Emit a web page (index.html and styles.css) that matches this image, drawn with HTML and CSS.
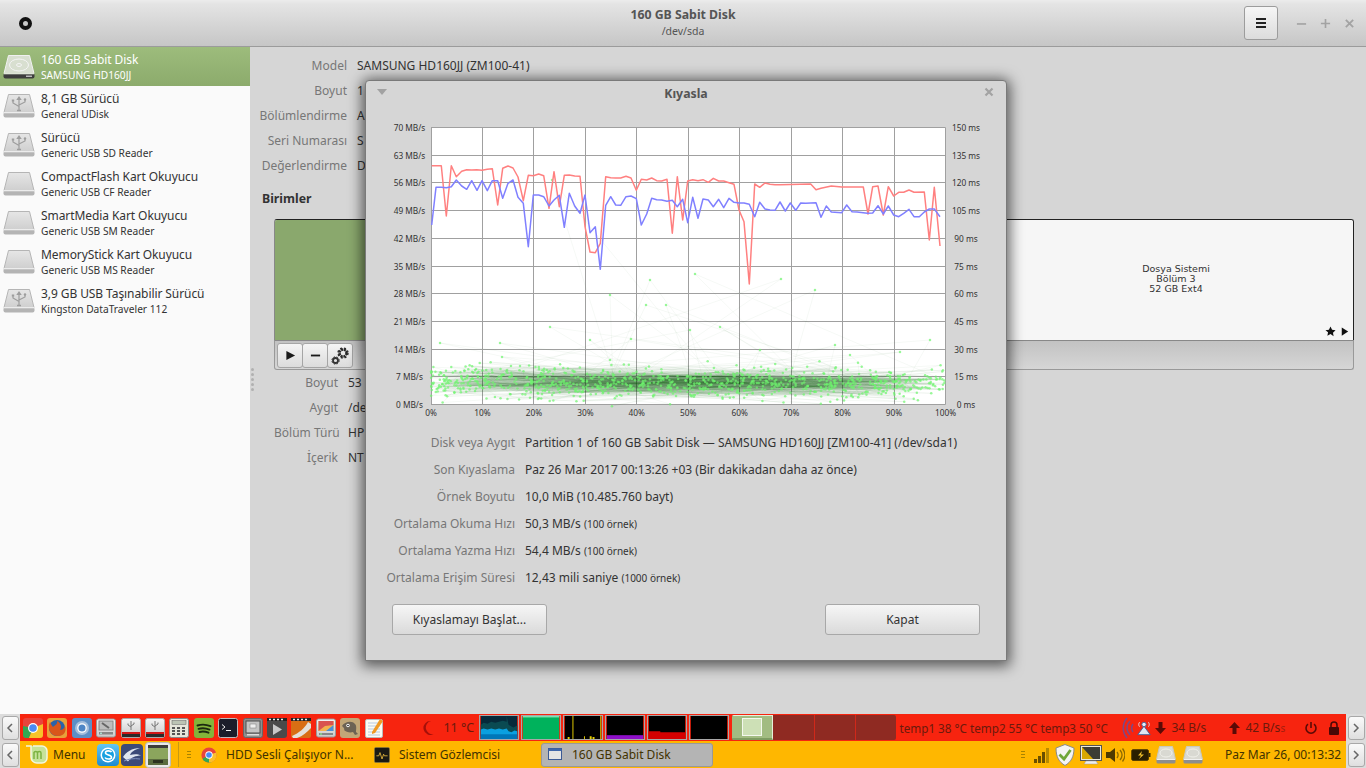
FILE: index.html
```html
<!DOCTYPE html>
<html lang="tr">
<head>
<meta charset="utf-8">
<title>Diskler</title>
<link rel="stylesheet" href="styles.css">
</head>
<body>
<svg class="defs" width="0" height="0" aria-hidden="true">
  <defs>
    <linearGradient id="gDrive" x1="0" y1="0" x2="0" y2="1"><stop offset="0" stop-color="#e6e6e6"/><stop offset="1" stop-color="#cfcfcf"/></linearGradient>
    <linearGradient id="gTile" x1="0" y1="0" x2="0" y2="1"><stop offset="0" stop-color="#f4f4f4"/><stop offset="1" stop-color="#c9c9c9"/></linearGradient>
    <linearGradient id="gBlue" x1="0" y1="0" x2="0" y2="1"><stop offset="0" stop-color="#62c6f5"/><stop offset="1" stop-color="#1c8ad0"/></linearGradient>
    <symbol id="drive" viewBox="0 0 32 24"><path d="M5.5 .5h21l4.5 18H1z" fill="url(#gDrive)" stroke="#b5b5b5"/><rect x=".5" y="18" width="31" height="5.5" rx="2" fill="#b4b4b4"/><rect x="1" y="18" width="30" height="1.3" fill="#ececec"/></symbol>
    <symbol id="usb" viewBox="0 0 32 24"><use href="#drive"/><path d="M16 3v13M16 3l-1.6 2.400h3.200zM16 12.500 10 9V7M16 11l6-3V6" fill="none" stroke="#9d9d9d" stroke-width="1.200"/><rect x="8.800" y="5.500" width="2.400" height="2" fill="#9d9d9d"/><circle cx="22" cy="5.500" r="1.200" fill="#9d9d9d"/><path d="M14 16.500h4" stroke="#9d9d9d" stroke-width="1.500"/></symbol>
    <symbol id="hdd" viewBox="0 0 32 24"><path d="M5.500 .5h21l4.500 18H1z" fill="#d8dfd0" stroke="#f0f0f0"/><ellipse cx="16" cy="10" rx="9.500" ry="6" fill="none" stroke="#f4f4f4"/><ellipse cx="16" cy="10" rx="2.500" ry="1.500" fill="none" stroke="#f4f4f4"/><rect x=".5" y="18" width="31" height="5.500" rx="2" fill="#3d3d3d"/><rect x="1" y="18" width="30" height="1.300" fill="#dfe6d8"/><rect x="23" y="20.500" width="6" height="1.500" fill="#bbb"/></symbol>
    <symbol id="chrome" viewBox="0 0 20 20"><circle cx="10" cy="10" r="9.500" fill="#e8453c"/><path d="M10 10 1.800 14.800A9.500 9.500 0 0 0 10 19.500 9.500 9.500 0 0 0 13 19z" fill="#34a853"/><path d="M10 10 19 7A9.500 9.500 0 0 1 10 19.500z" fill="#fbc02d"/><circle cx="10" cy="10" r="4.600" fill="#fff"/><circle cx="10" cy="10" r="3.500" fill="#4a8af4"/></symbol>
    <symbol id="tileChrome" viewBox="0 0 20 20"><rect width="20" height="20" rx="3" fill="#e8453c"/><path d="M0 8 10 10 6 20H3a3 3 0 0 1-3-3z" fill="#34a853"/><path d="M20 6 10 10 6 20h11a3 3 0 0 0 3-3z" fill="#f7c32a"/><circle cx="10" cy="10" r="5" fill="#fff"/><circle cx="10" cy="10" r="3.800" fill="#4a8af4"/></symbol>
    <symbol id="firefox" viewBox="0 0 20 20"><rect width="20" height="20" rx="3" fill="#e8a13a"/><circle cx="10" cy="10" r="8" fill="#2a62a8"/><path d="M3 4c-3 6 0 14 8 14 6 0 9-5 7-10-1 3-3 4-5 4 2-3 1-7-3-9 1 3-2 4-4 6-1-1-2-3-3-5z" fill="#d9571a"/></symbol>
    <symbol id="chromium" viewBox="0 0 20 20"><rect width="20" height="20" rx="3" fill="#5d8fc6"/><circle cx="10" cy="10" r="7" fill="#a5bfdd"/><circle cx="10" cy="10" r="4.800" fill="#fff"/><circle cx="10" cy="10" r="3.500" fill="#4e86c6"/></symbol>
    <symbol id="tool" viewBox="0 0 20 20"><rect x=".5" y="1" width="19" height="18" rx="2" fill="url(#gTile)" stroke="#999"/><rect x="3" y="3" width="14" height="9" fill="#bdbdbd" stroke="#888"/><path d="M6 5l7 5" stroke="#666" stroke-width="2"/><rect x="3" y="14" width="14" height="2.500" fill="#888"/><rect x="4" y="14.700" width="2" height="1" fill="#bfe"/></symbol>
    <symbol id="usbTile" viewBox="0 0 20 20"><rect x=".5" y=".5" width="19" height="19" rx="2" fill="url(#gTile)" stroke="#aaa"/><path d="M10 3v9M10 9 7 7V5.500M10 8l3-2V4.500" fill="none" stroke="#777"/><rect x="1" y="14" width="18" height="2" fill="#d01818"/><rect x="1" y="16" width="18" height="3" fill="#2a2a2a"/></symbol>
    <symbol id="calc" viewBox="0 0 20 20"><rect x=".5" y=".5" width="19" height="19" rx="2" fill="#e6e6da" stroke="#888"/><rect x="3" y="2.500" width="14" height="4" fill="#bcc4b4" stroke="#666" stroke-width=".5"/><path d="M3 9h3v2H3zM8 9h3v2H8zM13 9h3v2h-3zM3 12h3v2H3zM8 12h3v2H8zM13 12h3v2h-3zM3 15h3v2H3zM8 15h3v2H8zM13 15h3v2h-3z" fill="#555"/></symbol>
    <symbol id="spotify" viewBox="0 0 20 20"><rect width="20" height="20" rx="3" fill="#84b43a"/><path d="M3.500 7.500c4-1.300 9-1 13 .7M4.500 10.800c3.500-1 7.500-.7 11 .8M5.500 14c3-.8 6-.5 9 .7" fill="none" stroke="#1c2a10" stroke-width="1.900" stroke-linecap="round"/></symbol>
    <symbol id="term" viewBox="0 0 20 20"><rect x=".5" y=".5" width="19" height="19" rx="2" fill="#1b1d2a" stroke="#bbb"/><path d="M4 6.500 7 9 4 11.500M8 12.500h5" fill="none" stroke="#eee"/></symbol>
    <symbol id="screen" viewBox="0 0 20 20"><rect x=".5" y=".5" width="19" height="19" rx="2" fill="#8e8e8e" stroke="#666"/><rect x="3" y="3" width="14" height="12" fill="#c4c4c4" stroke="#4d4d4d"/><rect x="7" y="6" width="6" height="4" fill="#eee" stroke="#777" stroke-width=".5"/><rect x="4" y="16" width="12" height="1.500" fill="#ddd"/></symbol>
    <symbol id="video" viewBox="0 0 20 20"><rect width="20" height="20" rx="3" fill="#4a4a4a"/><path d="M0 0h20v3H0z" fill="#222"/><path d="M2 .8h2v1.500H2zM6 .8h2v1.500H6zM10 .8h2v1.500h-2zM14 .8h2v1.500h-2z" fill="#eee"/><path d="M6 6v11l9-5.500z" fill="#c8c8c8"/></symbol>
    <symbol id="video2" viewBox="0 0 20 20"><rect width="20" height="20" rx="2" fill="#d86e14"/><path d="M0 0h20v3H0z" fill="#222"/><path d="M2 .8h2v1.500H2zM6 .8h2v1.500H6zM10 .8h2v1.500h-2zM14 .8h2v1.500h-2z" fill="#eee"/><path d="M1 18C8 15 14 10 17 4l3 2v4C16 14 12 18 6 20H2z" fill="#e4e0d8"/></symbol>
    <symbol id="monitor" viewBox="0 0 20 20"><rect x=".5" y="1" width="19" height="18" rx="2" fill="url(#gTile)" stroke="#999"/><rect x="2.500" y="3" width="15" height="10" fill="#f3b24d"/><path d="M2.500 3h15v4L9 8 2.500 13z" fill="#d9534f"/><path d="M10 13l7.500-6v6z" fill="#4a90d9"/><rect x="3" y="15" width="14" height="2" fill="#888"/><rect x="4" y="15.500" width="2" height="1" fill="#8f8"/></symbol>
    <symbol id="gimp" viewBox="0 0 20 20"><rect width="20" height="20" rx="3" fill="#c2a777"/><path d="M2 8c2-4 10-6 13-2 2 2 1 6 1 8l2 2-3 1-2-3c-3 1-7 0-9-2 1-1 0-2-2-4z" fill="#6d6354"/><circle cx="8" cy="7.500" r="1.700" fill="#fff"/><circle cx="8" cy="7.500" r=".8" fill="#111"/></symbol>
    <symbol id="notes" viewBox="0 0 20 20"><rect x="1.500" y="1.500" width="17" height="18" rx="1.500" fill="#fbfbf4" stroke="#bbb"/><path d="M4 5h12M4 8h12M4 11h12M4 14h12M4 17h12" stroke="#9cb5d6" stroke-width=".7"/><path d="M8 14 16 1l3 2-8 12-3 1z" fill="#f09a24"/></symbol>
    <symbol id="mint" viewBox="0 0 24 22"><path d="M1 1h5v11a6 6 0 0 0 6 6h5a5 5 0 0 0 5-5V6a5 5 0 0 0-5-5H8" transform="translate(0 1)" fill="#c6e39a" stroke="#f1f8e2" stroke-width="1.500"/><path d="M9 15V8M9 9c0-2 3.500-2 3.500 0v6M12.500 9c0-2 3.500-2 3.500 0v6" fill="none" stroke="#7cb342" stroke-width="1.500"/></symbol>
    <symbol id="skype" viewBox="0 0 22 22"><rect width="22" height="22" rx="4" fill="url(#gBlue)"/><circle cx="11" cy="11" r="7.500" fill="#fff"/><circle cx="11" cy="11" r="6" fill="#17a0e0"/><path d="M14.500 8c-1-1.500-6-1.800-6 .8s6 1.600 6 4.400c0 2.500-5.500 2.300-6.500.3" fill="none" stroke="#fff" stroke-width="1.600"/></symbol>
    <symbol id="earth" viewBox="0 0 22 22"><rect width="22" height="22" rx="4" fill="#3c4a78"/><path d="M2 13c3-5 9-9 17-9-6 2-9 4-10 7 4-1 8-1 11 .5-5 0-10 2-13 6z" fill="#dfe6f0"/><path d="M3 17c4-2 10-3 16-2" stroke="#7e90c0" fill="none"/></symbol>
    <symbol id="desk" viewBox="0 0 26 26"><rect x=".5" y=".5" width="25" height="25" rx="3" fill="#e9e9e9" stroke="#bbb"/><rect x="3" y="3" width="20" height="20" fill="#5a6b3e"/><rect x="3" y="3" width="20" height="3" fill="#3c3c3c"/><rect x="3" y="6" width="20" height="11" fill="#8ba55d"/><rect x="8" y="18" width="10" height="3" fill="#2c3320"/></symbol>
    <symbol id="sysmon" viewBox="0 0 20 20"><rect x=".5" y=".5" width="19" height="19" rx="2" fill="#1a1a14" stroke="#8a7a40"/><path d="M3 11h3l1.500-4 2.500 8 2-6 1 2h4" fill="none" stroke="#f0c040"/></symbol>
    <symbol id="win" viewBox="0 0 16 16"><rect x=".5" y="1.500" width="13" height="11" fill="#e4e4e4" stroke="#3c5a94"/><rect x=".5" y="1.500" width="13" height="2.500" fill="#3f66aa"/></symbol>
    <symbol id="disktray" viewBox="0 0 20 18"><path d="M3.500 .5h13l3 13H.5z" fill="#d9d9d2" stroke="#c8c8be"/><ellipse cx="10" cy="7" rx="6" ry="4" fill="none" stroke="#f0f0ea"/><rect x=".5" y="13" width="19" height="4.500" rx="1.500" fill="#8e8e8e"/><rect x="1" y="13" width="18" height="1" fill="#f0f0f0"/></symbol>
    <symbol id="shield" viewBox="0 0 20 22"><path d="M10 .5 19 4c0 9-3 14-9 17.500C4 18 1 13 1 4z" fill="#f4f4f4" stroke="#8a8a8a"/><path d="M4.500 10.500 9 15 15.500 6" fill="none" stroke="#6fa63a" stroke-width="2.800"/></symbol>
    <symbol id="gear" viewBox="0 0 20 20"><circle cx="13" cy="7" r="3.500" fill="none" stroke="#2a2a2a" stroke-width="2.500" stroke-dasharray="2.200 .6"/><circle cx="13" cy="7" r="5" fill="none" stroke="#2a2a2a" stroke-width="1.400" stroke-dasharray="2 2"/><circle cx="5.500" cy="14.500" r="2.500" fill="none" stroke="#333" stroke-width="1.800"/><circle cx="5.500" cy="14.500" r="3.700" fill="none" stroke="#333" stroke-width="1" stroke-dasharray="1.500 1.500"/></symbol>
  </defs>
</svg>

<div class="screen">
  <div class="window">
    <header class="headerbar">
      <div class="head-left"><span class="ring"></span></div>
      <div class="head-title"><strong>160 GB Sabit Disk</strong><span>/dev/sda</span></div>
      <div class="head-right">
        <button class="menu-btn" type="button" aria-label="Menü"><span class="burger"></span></button>
        <div class="wm">
          <svg viewBox="0 0 12 12"><path d="M1 6.500h10" stroke="#a3a3a3" stroke-width="1.800"/></svg>
          <svg viewBox="0 0 12 12"><path d="M1 6h10M6 1v10" stroke="#a3a3a3" stroke-width="1.800"/></svg>
          <svg viewBox="0 0 12 12"><path d="M2 2l8 8M10 2l-8 8" stroke="#a3a3a3" stroke-width="2"/></svg>
        </div>
      </div>
    </header>
    <div class="content">
      <aside class="sidebar">
        <div class="dev selected"><svg class="dev-ic"><use href="#hdd"/></svg><div class="dev-text"><div class="dev-name">160 GB Sabit Disk</div><div class="dev-sub">SAMSUNG HD160JJ</div></div></div>
        <div class="dev"><svg class="dev-ic"><use href="#usb"/></svg><div class="dev-text"><div class="dev-name">8,1 GB Sürücü</div><div class="dev-sub">General UDisk</div></div></div>
        <div class="dev"><svg class="dev-ic"><use href="#usb"/></svg><div class="dev-text"><div class="dev-name">Sürücü</div><div class="dev-sub">Generic USB SD Reader</div></div></div>
        <div class="dev"><svg class="dev-ic"><use href="#drive"/></svg><div class="dev-text"><div class="dev-name">CompactFlash Kart Okuyucu</div><div class="dev-sub">Generic USB CF Reader</div></div></div>
        <div class="dev"><svg class="dev-ic"><use href="#drive"/></svg><div class="dev-text"><div class="dev-name">SmartMedia Kart Okuyucu</div><div class="dev-sub">Generic USB SM Reader</div></div></div>
        <div class="dev"><svg class="dev-ic"><use href="#drive"/></svg><div class="dev-text"><div class="dev-name">MemoryStick Kart Okuyucu</div><div class="dev-sub">Generic USB MS Reader</div></div></div>
        <div class="dev"><svg class="dev-ic"><use href="#usb"/></svg><div class="dev-text"><div class="dev-name">3,9 GB USB Taşınabilir Sürücü</div><div class="dev-sub">Kingston DataTraveler 112</div></div></div>
      </aside>
      <main class="main">
        <span class="paned-grip"><i></i><i></i><i></i><i></i><i></i></span>
        <dl class="props props-top">
          <dt>Model</dt><dd>SAMSUNG HD160JJ (ZM100-41)</dd>
          <dt>Boyut</dt><dd>1</dd>
          <dt>Bölümlendirme</dt><dd>A</dd>
          <dt>Seri Numarası</dt><dd>S</dd>
          <dt>Değerlendirme</dt><dd>D</dd>
        </dl>
        <h2 class="vol-title">Birimler</h2>
        <div class="volumes">
          <div class="seg seg-green"></div>
          <div class="seg seg-fs">
            <span>Dosya Sistemi<br>Bölüm 3<br>52 GB Ext4</span>
            <span class="seg-marks">
              <svg viewBox="0 0 12 12"><path d="M6 .5l1.700 3.600 3.800.5-2.800 2.700.7 3.900L6 8.800l-3.400 1.900.7-3.900L.5 4.600l3.800-.5z" fill="#111"/></svg>
              <svg viewBox="0 0 12 12"><path d="M3 1.500v9l7-4.500z" fill="#111"/></svg>
            </span>
          </div>
        </div>
        <div class="vol-tools">
          <div class="tool-group">
            <button type="button" class="tool" aria-label="Bağla"><svg viewBox="0 0 12 12"><path d="M1.500 1v10l9.500-5z" fill="#1a1a1a"/></svg></button>
            <button type="button" class="tool" aria-label="Sil"><svg viewBox="0 0 12 12"><path d="M1 6h10" stroke="#1a1a1a" stroke-width="2"/></svg></button>
            <button type="button" class="tool" aria-label="Ayarlar"><svg class="tool-gear"><use href="#gear"/></svg></button>
          </div>
        </div>
        <dl class="props props-bottom">
          <dt>Boyut</dt><dd>53</dd>
          <dt>Aygıt</dt><dd>/de</dd>
          <dt>Bölüm Türü</dt><dd>HP</dd>
          <dt>İçerik</dt><dd>NT</dd>
        </dl>
      </main>
    </div>
  </div>

  <div class="panel panel-top">
    <span class="edge"><button type="button" class="edge-btn" aria-label="Geri"><svg viewBox="0 0 8 12"><path d="M6 2 2 6l4 4" fill="none" stroke="#666" stroke-width="1.500"/></svg></button></span>
    <div class="launchers">
      <svg class="lic"><use href="#tileChrome"/></svg><svg class="lic"><use href="#firefox"/></svg><svg class="lic"><use href="#chromium"/></svg><svg class="lic"><use href="#tool"/></svg><svg class="lic"><use href="#usbTile"/></svg><svg class="lic"><use href="#usbTile"/></svg><svg class="lic"><use href="#calc"/></svg><svg class="lic"><use href="#spotify"/></svg><svg class="lic"><use href="#term"/></svg><svg class="lic"><use href="#screen"/></svg><svg class="lic"><use href="#video"/></svg><svg class="lic"><use href="#video2"/></svg><svg class="lic"><use href="#monitor"/></svg><svg class="lic"><use href="#gimp"/></svg><svg class="lic"><use href="#notes"/></svg>
    </div>
    <svg class="moon" viewBox="0 0 14 16"><path d="M10 1a7 7 0 1 0 3 13A6.500 6.500 0 0 1 10 1z" fill="#a5100a"/></svg>
    <span class="weather">11 °C</span>
    <div class="graphs">
      <svg class="graph" viewBox="0 0 38 24"><rect width="38" height="24" fill="#06293a"/><path d="M0 12l3-2 4 1 4-2 4 1 4-1 4-1 4 1V3l2 9 3 2 2 1 4-2v11H0z" fill="#0a4a52" transform="translate(0 -3)"/><path d="M0 14l3-1 4 1 4-1 4 1 4-1 4 1 4-1 2 3 3 1 3-2 3 1v10H0z" fill="#0aa0e0"/><path d="M0 19h38v5H0z" fill="#0076b8"/></svg>
      <svg class="graph" viewBox="0 0 38 24"><rect width="38" height="24" fill="#00b25c"/><rect width="38" height="1.500" fill="#7fe0b0"/></svg>
      <svg class="graph" viewBox="0 0 38 24"><rect width="38" height="24" fill="#000"/><path d="M8 0h1v24H8zM37 0h1v24h-1zM3 22h2v2H3zM20 21h1v3h-1zM26 21h2v3h-2zM29 22h2v2h-2z" fill="#e8d000"/></svg>
      <svg class="graph" viewBox="0 0 38 24"><rect width="38" height="24" fill="#000"/><rect y="20" width="38" height="4" fill="#8e10c8"/></svg>
      <svg class="graph" viewBox="0 0 38 24"><rect width="38" height="24" fill="#000"/><path d="M0 16h12v1h26v7H0z" fill="#d40000"/></svg>
      <svg class="graph" viewBox="0 0 38 24"><rect width="38" height="24" fill="#000"/></svg>
    </div>
    <div class="workspaces">
      <div class="ws ws-on"><span class="ws-win"></span></div>
      <div class="ws"></div><div class="ws"></div><div class="ws"></div>
    </div>
    <span class="temps">temp1 38 °C temp2 55 °C temp3 50 °C</span>
    <svg class="wave" viewBox="0 0 14 24"><path d="M6 2C1 8 1 16 6 22M9 5C5 9 5 15 9 19M12 8C10 11 10 13 12 16" fill="none" stroke="#7a4a88" stroke-width="1.500"/></svg>
    <svg class="net-ic" viewBox="0 0 18 18"><circle cx="9" cy="5" r="2.500" fill="#e8edf5" stroke="#3a5f9a"/><path d="M2 16.500 9 7l7 9.500z" fill="#dfe6f2" stroke="#3a5f9a"/><path d="M4 2.500C2.800 4 2.800 6 4 7.500M14 2.500c1.200 1.500 1.200 3.500 0 5" fill="none" stroke="#dfe6f2"/></svg>
    <svg class="arrow-ic arrow-down" viewBox="0 0 12 14"><path d="M4 1h4v6h3.500L6 13 .5 7H4z" fill="#5a0a06"/></svg>
    <span class="rate">34 B/s</span>
    <svg class="arrow-ic arrow-up" viewBox="0 0 12 14"><path d="M4 13h4V7h3.500L6 1 .5 7H4z" fill="#5a0a06"/></svg>
    <span class="rate">42 B/s</span><span class="rate-s">s</span>
    <svg class="power" viewBox="0 0 14 14"><path d="M4 3.200a5 5 0 1 0 6 0M7 1v6" fill="none" stroke="#5a0a06" stroke-width="1.600"/></svg>
    <svg class="lock" viewBox="0 0 12 14"><path d="M3 6V4a3 3 0 0 1 6 0v2" fill="none" stroke="#4a0806" stroke-width="1.500"/><rect x="1" y="6" width="10" height="8" rx="1" fill="#4a0806"/></svg>
    <span class="edge edge-right"><button type="button" class="edge-btn" aria-label="İleri"><svg viewBox="0 0 8 12"><path d="M2 2l4 4-4 4" fill="none" stroke="#666" stroke-width="1.500"/></svg></button></span>
  </div>

  <div class="panel panel-bottom">
    <span class="edge"><button type="button" class="edge-btn" aria-label="Geri"><svg viewBox="0 0 8 12"><path d="M6 2 2 6l4 4" fill="none" stroke="#666" stroke-width="1.500"/></svg></button></span>
    <svg class="mint"><use href="#mint"/></svg>
    <span class="menu-label">Menu</span>
    <svg class="quick q1"><use href="#skype"/></svg>
    <svg class="quick q2"><use href="#earth"/></svg>
    <svg class="quick-desk"><use href="#desk"/></svg>
    <span class="sep"></span>
    <span class="handle"><i></i><i></i><i></i></span>
    <div class="task task-a"><svg class="task-ic"><use href="#chrome"/></svg><span>HDD Sesli Çalışıyor N...</span></div>
    <div class="task task-b"><svg class="task-ic"><use href="#sysmon"/></svg><span>Sistem Gözlemcisi</span></div>
    <div class="task task-c"><svg class="task-ic"><use href="#win"/></svg><span>160 GB Sabit Disk</span></div>
    <span class="handle handle-right"><i></i><i></i><i></i></span>
    <svg class="tray signal" viewBox="0 0 16 16"><path d="M1 12h3v4H1zM5 9h3v7H5zM9 5h3v11H9z" fill="#6a4f00"/><path d="M13 1h3v15h-3z" fill="#b98a00"/></svg>
    <svg class="tray shield"><use href="#shield"/></svg>
    <svg class="tray mon" viewBox="0 0 22 20"><rect x=".5" y=".5" width="21" height="15" fill="#ece9dc" stroke="#555"/><rect x="2" y="2" width="18" height="12" fill="#3c3c34"/><path d="M2 2v12h11z" fill="#d9a800"/><path d="M6 16h10l2 3H4z" fill="#eee" stroke="#999" stroke-width=".5"/></svg>
    <svg class="tray vol" viewBox="0 0 20 16"><path d="M1 5h4l5-4v14l-5-4H1z" fill="#4f3b00"/><path d="M12 5c1.500 2 1.500 4 0 6M15 3c2.500 3 2.500 7 0 10M17.500 1.500c3 4 3 9 0 13" fill="none" stroke="#8c6a00" stroke-width="1.300"/></svg>
    <svg class="tray batt" viewBox="0 0 20 14"><rect x=".8" y="1.800" width="16.500" height="10.500" rx="1" fill="#2a1f00" stroke="#3b2c00"/><rect x="17.500" y="5" width="2" height="4" fill="#3b2c00"/><path d="M11 3 7 7.500h3L8 11l5-4.500h-3z" fill="#f2c22c"/></svg>
    <svg class="tray disk d1"><use href="#disktray"/></svg>
    <svg class="tray disk d2"><use href="#disktray"/></svg>
    <span class="clock">Paz Mar 26, 00:13:32</span>
    <span class="edge edge-right"><button type="button" class="edge-btn" aria-label="İleri"><svg viewBox="0 0 8 12"><path d="M2 2l4 4-4 4" fill="none" stroke="#666" stroke-width="1.500"/></svg></button></span>
  </div>

  <section class="dialog">
    <div class="dlg-title">
      <svg class="dlg-arrow" viewBox="0 0 10 6"><path d="M0 0h10L5 6z" fill="#a2a2a2"/></svg>
      <strong>Kıyasla</strong>
      <svg class="dlg-close" viewBox="0 0 12 12"><path d="M2.500 2.500l7 7M9.500 2.500l-7 7" stroke="#a3a3a3" stroke-width="2.200"/></svg>
    </div>
    <svg id="chart" class="chart" viewBox="366 112 640 317"></svg>
    <dl class="info">
      <dt>Disk veya Aygıt</dt><dd>Partition 1 of 160 GB Sabit Disk — SAMSUNG HD160JJ [ZM100-41] (/dev/sda1)</dd>
      <dt>Son Kıyaslama</dt><dd>Paz 26 Mar 2017 00:13:26 +03 (Bir dakikadan daha az önce)</dd>
      <dt>Örnek Boyutu</dt><dd>10,0 MiB (10.485.760 bayt)</dd>
      <dt>Ortalama Okuma Hızı</dt><dd>50,3 MB/s <small>(100 örnek)</small></dd>
      <dt>Ortalama Yazma Hızı</dt><dd>54,4 MB/s <small>(100 örnek)</small></dd>
      <dt>Ortalama Erişim Süresi</dt><dd>12,43 mili saniye <small>(1000 örnek)</small></dd>
    </dl>
    <div class="dlg-actions">
      <button type="button" class="btn">Kıyaslamayı Başlat...</button>
      <button type="button" class="btn">Kapat</button>
    </div>
  </section>
</div>
<script src="chart.js"></script>
</body>
</html>
```

FILE: styles.css
```css
* { box-sizing: border-box; }
html, body { margin: 0; padding: 0; height: 100%; overflow: hidden; }
body { font-family: "Noto Sans", sans-serif; font-size: 12px; color: #333; background: #d6d6d6; }
.defs { position: absolute; }
button { font: inherit; color: inherit; padding: 0; }
.screen { position: relative; width: 1366px; height: 768px; display: flex; flex-direction: column; }

.window { height: 714px; display: flex; flex-direction: column; }
.headerbar { height: 47px; display: grid; grid-template-columns: 1fr auto 1fr; align-items: center; background: linear-gradient(#ececec 0, #e4e4e4 4px, #c6c6c6 100%); border-bottom: 1px solid #9b9b9b; }
.head-left { padding-left: 19px; display: flex; }
.ring { width: 13px; height: 13px; border-radius: 50%; border: 4px solid #111; background: #c8c8c8; }
.head-title { display: flex; flex-direction: column; align-items: center; color: #555; }
.head-title strong { font-size: 12.3px; line-height: 16px; font-weight: 700; }
.head-title span { font-size: 10.5px; line-height: 16px; }
.head-right { display: flex; justify-content: flex-end; align-items: center; padding-right: 11px; }
.menu-btn { width: 34px; height: 34px; border: 1px solid #9c9c9c; border-radius: 3px; background: linear-gradient(#f6f6f6, #dcdcdc); display: flex; align-items: center; justify-content: center; margin-right: 18px; }
.burger { width: 10px; height: 10px; border-top: 2px solid #222; border-bottom: 2px solid #222; position: relative; }
.burger::after { content: ""; position: absolute; left: 0; right: 0; top: 2px; height: 2px; background: #222; }
.wm { display: flex; gap: 13px; }
.wm svg { width: 11px; height: 11px; }

.content { flex: 1; display: flex; min-height: 0; }
.sidebar { width: 250px; background: #fafafa; }
.dev { height: 39px; display: flex; align-items: center; gap: 6px; padding-left: 3px; color: #333; }
.dev.selected { background: linear-gradient(#9dbc7c, #8cab6c); color: #fff; }
.dev-ic { width: 32px; height: 24px; flex: none; margin-top: 1px; }
.dev-text { padding-top: 1px; }
.dev-name { font-size: 12px; letter-spacing: -.08px; line-height: 15px; }
.dev-sub { font-size: 10.2px; line-height: 15px; margin-top: 1px; }

.main { flex: 1; position: relative; background: #d6d6d6; padding: 6px 12px 0 24px; }
.paned-grip { position: absolute; left: 1px; top: 321px; display: flex; flex-direction: column; gap: 2px; }
.paned-grip i { width: 3px; height: 3px; background: #b0b0b0; border-radius: 50%; }
.props { display: grid; margin: 0; grid-auto-rows: 25px; align-items: center; column-gap: 10px; }
.props dt { text-align: right; color: #777; white-space: nowrap; }
.props dd { margin: 0; color: #333; white-space: nowrap; }
.props-top { grid-template-columns: 97px 1fr; margin-left: -24px; }
.props-bottom { grid-template-columns: 64px 1fr; }
.vol-title { font-size: 12.3px; line-height: 16px; font-weight: 700; margin: 13px 0 12px -12px; color: #333; }
.volumes { height: 121px; display: flex; border: 1px solid #555; border-width: 1px 1px 0 1px; border-color: #222 #222 #888 #888; border-radius: 3px 3px 0 0; overflow: hidden; }
.seg { height: 120px; }
.seg-green { flex: 1; background: #8aa86d; }
.seg-fs { width: 356px; position: relative; background: #f6f6f6; display: flex; align-items: center; justify-content: center; text-align: center; padding: 0 0 3px 2px; font-family: "DejaVu Sans", sans-serif; font-size: 9.5px; line-height: 10px; color: #333; }
.seg-marks { position: absolute; right: 3px; bottom: 3px; display: flex; gap: 3px; }
.seg-marks svg { width: 11px; height: 11px; }
.vol-tools { height: 30px; background: linear-gradient(#c2c2c2, #d6d6d6); border: 1px solid #999; border-top: 1px solid #888; border-radius: 0 0 3px 3px; padding: 2px 2px; }
.tool-group { display: flex; }
.tool { width: 26px; height: 25px; border: 1px solid #a5a5a5; background: linear-gradient(#f4f4f4, #dcdcdc); display: flex; align-items: center; justify-content: center; margin-right: -1px; border-radius: 3px; }
.tool svg { width: 11px; height: 11px; }
.tool svg.tool-gear { width: 20px; height: 20px; }

.panel { height: 27px; display: flex; align-items: center; position: relative; white-space: nowrap; }
.panel-top { background: #f7240f; color: #6b1a0c; }
.panel-bottom { background: #ffb700; color: #423200; }
.edge { width: 20px; height: 27px; flex: none; background: #dcdcdc; display: flex; align-items: center; justify-content: center; }
.edge-right { margin-left: auto; }
.edge-btn { width: 17px; height: 24px; border: 1px solid #a8a8a8; border-radius: 3px; background: linear-gradient(#fafafa, #dfdfdf); display: flex; align-items: center; justify-content: center; }
.edge-btn svg { width: 8px; height: 12px; }

.launchers { display: flex; gap: 4.4px; margin-left: 3px; }
.lic { width: 20px; height: 20px; flex: none; }
.moon { width: 14px; height: 16px; margin-left: 37px; }
.weather { margin-left: 8px; width: 36px; font-size: 12.5px; }
.graphs { display: flex; gap: 2px; }
.graph { width: 40px; height: 25px; border: 1px solid #a8a8a8; flex: none; }
.workspaces { display: flex; margin-left: 3px; height: 25px; background: #8f2a22; border-radius: 2px; overflow: hidden; }
.ws { width: 41px; border-left: 1px solid #d0281a; }
.ws:first-child { border-left: 0; }
.ws:nth-child(2) { border-left: 0; }
.ws-on { background: #a2bc82; border: 1px solid #e6efda; border-bottom: 2px solid #7f9c62; display: flex; justify-content: center; padding-top: 2px; }
.ws-win { width: 20px; height: 18px; background: #cde0b6; border: 1px solid #f4f8ee; }
.temps { margin-left: 3px; width: 222px; font-size: 11.7px; }
.wave { width: 14px; height: 24px; flex: none; }
.net-ic { width: 16px; height: 16px; margin-left: 1px; flex: none; }
.arrow-ic { width: 13px; height: 14px; flex: none; }
.arrow-down { margin-left: 2px; }
.arrow-up { margin-left: 20px; }
.rate { margin-left: 4px; width: 37px; }
.rate-s { font-size: 10px; opacity: .6; margin-left: -2px; width: 5px; }
.power { width: 14px; height: 14px; margin-left: 19px; flex: none; }
.lock { width: 12px; height: 14px; margin-left: 10px; flex: none; }

.mint { width: 24px; height: 22px; margin-left: 5px; flex: none; }
.menu-label { margin-left: 4px; width: 44px; }
.quick { width: 22px; height: 22px; flex: none; }
.q2 { margin-left: 2px; }
.quick-desk { width: 26px; height: 26px; margin-left: 2px; flex: none; }
.sep { width: 1px; height: 25px; background: #c99a10; margin-left: 7px; }
.handle { display: flex; flex-direction: column; gap: 2px; margin-left: 8px; }
.handle i { width: 4px; height: 1px; background: #a98200; }
.task { display: flex; align-items: center; height: 24px; flex: none; }
.task-ic { width: 16px; height: 16px; flex: none; }
.task-a { margin-left: 4px; padding-left: 6px; width: 179px; gap: 9px; }
.task-b { width: 167px; gap: 9px; }
.task-c { width: 172px; background: #b4b4b4; border: 1px solid #999; border-radius: 3px; padding-left: 6px; gap: 8px; }
.handle-right { margin-left: 308px; }
.tray { flex: none; }
.signal { width: 16px; height: 16px; margin-left: 8px; }
.shield { width: 20px; height: 22px; margin-left: 6px; }
.mon { width: 22px; height: 20px; margin-left: 5px; }
.vol { width: 20px; height: 16px; margin-left: 3px; }
.batt { width: 20px; height: 14px; margin-left: 6px; }
.disk { width: 20px; height: 18px; }
.d1 { margin-left: 5px; }
.d2 { margin-left: 7px; }
.clock { margin-left: 22px; }

.dialog { position: absolute; left: 365px; top: 80px; width: 642px; height: 581px; background: #d6d6d6; border: 1px solid #7a7a7a; border-radius: 4px 4px 0 0; box-shadow: 0 2px 14px 3px rgba(0,0,0,.6); display: flex; flex-direction: column; }
.dlg-title { height: 24px; position: relative; display: flex; align-items: center; justify-content: center; flex: none; color: #555; }
.dlg-title strong { font-size: 12.3px; font-weight: 700; }
.dlg-arrow { position: absolute; left: 11px; top: 8px; width: 10px; height: 6px; }
.dlg-close { position: absolute; right: 11px; top: 5px; width: 12px; height: 12px; }
.chart { width: 640px; height: 317px; margin-top: 7px; flex: none; display: block; font-family: "Noto Sans", sans-serif; }
.chart text { font-size: 8.3px; fill: #333; text-anchor: middle; }
.info { display: grid; grid-template-columns: 149px 1fr; grid-auto-rows: 27px; column-gap: 10px; margin: 0; align-items: center; }
.info dt { text-align: right; color: #777; white-space: nowrap; }
.info dd { margin: 0; color: #333; white-space: nowrap; }
.info small { font-size: 10px; }
.dlg-actions { display: flex; justify-content: space-between; padding: 13px 26px 0; }
.btn { width: 155px; height: 31px; border: 1px solid #a8a8a8; border-radius: 3px; background: linear-gradient(#f6f6f6, #dadada); font-size: 12px; color: #333; }
```

FILE: chart.js
```js
(function () {
  var NS = 'http://www.w3.org/2000/svg';
  var svg = document.getElementById('chart');
  function el(name, attrs, text) {
    var e = document.createElementNS(NS, name);
    for (var k in attrs) e.setAttribute(k, attrs[k]);
    if (text) e.textContent = text;
    svg.appendChild(e);
    return e;
  }
  var X0 = 431, X1 = 945.5, Y0 = 127.5, Y1 = 404.5;
  el('rect', { x: X0, y: Y0, width: X1 - X0, height: Y1 - Y0, fill: '#fff' });

  // grid and axis labels
  for (var i = 0; i <= 10; i++) {
    var y = Math.floor(Y0 + (Y1 - Y0) * i / 10) + 0.5;
    var x = Math.floor(X0 + (X1 - X0) * i / 10) + 0.5;
    el('path', { d: 'M' + X0 + ' ' + y + 'H' + X1, stroke: '#a0a0a0', 'stroke-width': 1, fill: 'none' });
    el('path', { d: 'M' + x + ' ' + Y0 + 'V' + Y1, stroke: '#a0a0a0', 'stroke-width': 1, fill: 'none' });
    el('text', { x: 409.5, y: y + 3 }, (70 - 7 * i) + ' MB/s');
    el('text', { x: 966, y: y + 3 }, (150 - 15 * i) + ' ms');
    el('text', { x: X0 + (X1 - X0) * i / 10, y: 416 }, (i * 10) + '%');
  }

  // seek samples: seeded generator keeps the picture stable
  var seed = 20170326;
  function rnd() {
    seed = (seed * 1664525 + 1013904223) >>> 0;
    return seed / 4294967296;
  }
  function gauss() { return (rnd() + rnd() + rnd() + rnd() - 2) / 2; }
  var pts = [];
  for (var n = 0; n < 1000; n++) {
    var px = X0 + rnd() * (X1 - X0);
    var py = 383 + gauss() * 27;
    pts.push([px, py]);
  }
  var out = [[610, 295], [646, 305], [550, 327], [815, 290], [695, 274], [781, 279], [552, 180],
    [500, 343], [440, 343], [502, 357], [511, 366], [631, 339], [666, 305], [650, 280], [720, 327],
    [930, 340], [690, 330], [760, 350], [850, 355], [900, 352], [590, 340], [835, 345], [610, 360]];
  out.forEach(function (p, idx) { pts[40 * idx + 15] = p; });

  for (var s = 1; s < pts.length; s++) {
    el('line', { x1: pts[s - 1][0], y1: pts[s - 1][1], x2: pts[s][0], y2: pts[s][1], stroke: 'rgba(30,90,30,.04)', 'stroke-width': 1 });
  }
  pts.forEach(function (p) {
    el('circle', { cx: p[0], cy: p[1], r: 1.25, fill: 'rgba(110,245,110,.7)' });
  });

  // traced from the reference: [x, y] in 3x crops
  function trace(ox, oy, raw) {
    var r = [];
    for (var j = 0; j < raw.length; j += 2) r.push((ox + raw[j] / 3).toFixed(1) + ',' + (oy + raw[j + 1] / 3).toFixed(1));
    return r;
  }
  var redA = [155,167,184,167,199,318,214,167,229,200,245,184,260,179,275,180,290,179,306,181,322,178,337,176,353,285,368,175,384,168,399,174,414,201,430,272,445,196,460,197,476,192,491,197,507,295,522,185,538,290,553,196,568,195,584,198,600,199,615,350,630,426,646,428,661,400,677,200,692,203,707,204,722,204,738,199,753,204,769,241,784,208,800,210,815,204,830,212,845,213,861,208,877,370,892,200];
  var redB = [8,330,23,213,38,209,54,212,69,209,85,217,100,205,116,213,131,213,147,218,162,223,177,300,192,335,208,522,224,222,239,232,255,219,270,223,285,224,300,224,392,222,408,239,423,235,454,228,485,231,550,231,564,312,578,230,594,228,610,315,625,230,641,258,656,247,671,247,687,240,702,247,733,246,748,390,763,232,780,408];
  var blueA = [155,345,168,232,184,232,199,233,214,230,229,210,245,228,260,238,275,212,291,241,306,212,322,242,337,212,353,212,368,265,384,220,399,210,414,262,430,280,445,410,460,255,476,255,491,260,507,288,522,270,538,256,553,352,568,250,584,288,600,310,615,255,630,368,646,350,661,478,677,286,692,260,707,285,722,286,738,260,753,258,769,266,784,345,800,312,815,265,830,269,845,270,861,274,877,271,892,290];
  var blueB = [8,268,23,338,38,262,54,325,69,267,85,270,100,290,116,268,131,293,147,265,162,277,177,279,192,279,208,283,224,320,239,277,255,297,270,300,285,301,300,276,316,303,331,279,347,301,362,279,377,280,408,278,423,322,439,288,454,306,485,308,500,285,516,305,531,306,562,310,578,309,594,287,610,312,625,288,641,315,656,320,671,310,687,298,702,320,718,320,733,306,748,297,763,297,780,320];
  el('polyline', { points: trace(380, 110, redA).concat(trace(680, 110, redB)).join(' '), fill: 'none', stroke: '#ff8080', 'stroke-width': 1.5, 'stroke-linejoin': 'round' });
  el('polyline', { points: trace(380, 110, blueA).concat(trace(680, 110, blueB)).join(' '), fill: 'none', stroke: '#8080ff', 'stroke-width': 1.5, 'stroke-linejoin': 'round' });
})();
```
